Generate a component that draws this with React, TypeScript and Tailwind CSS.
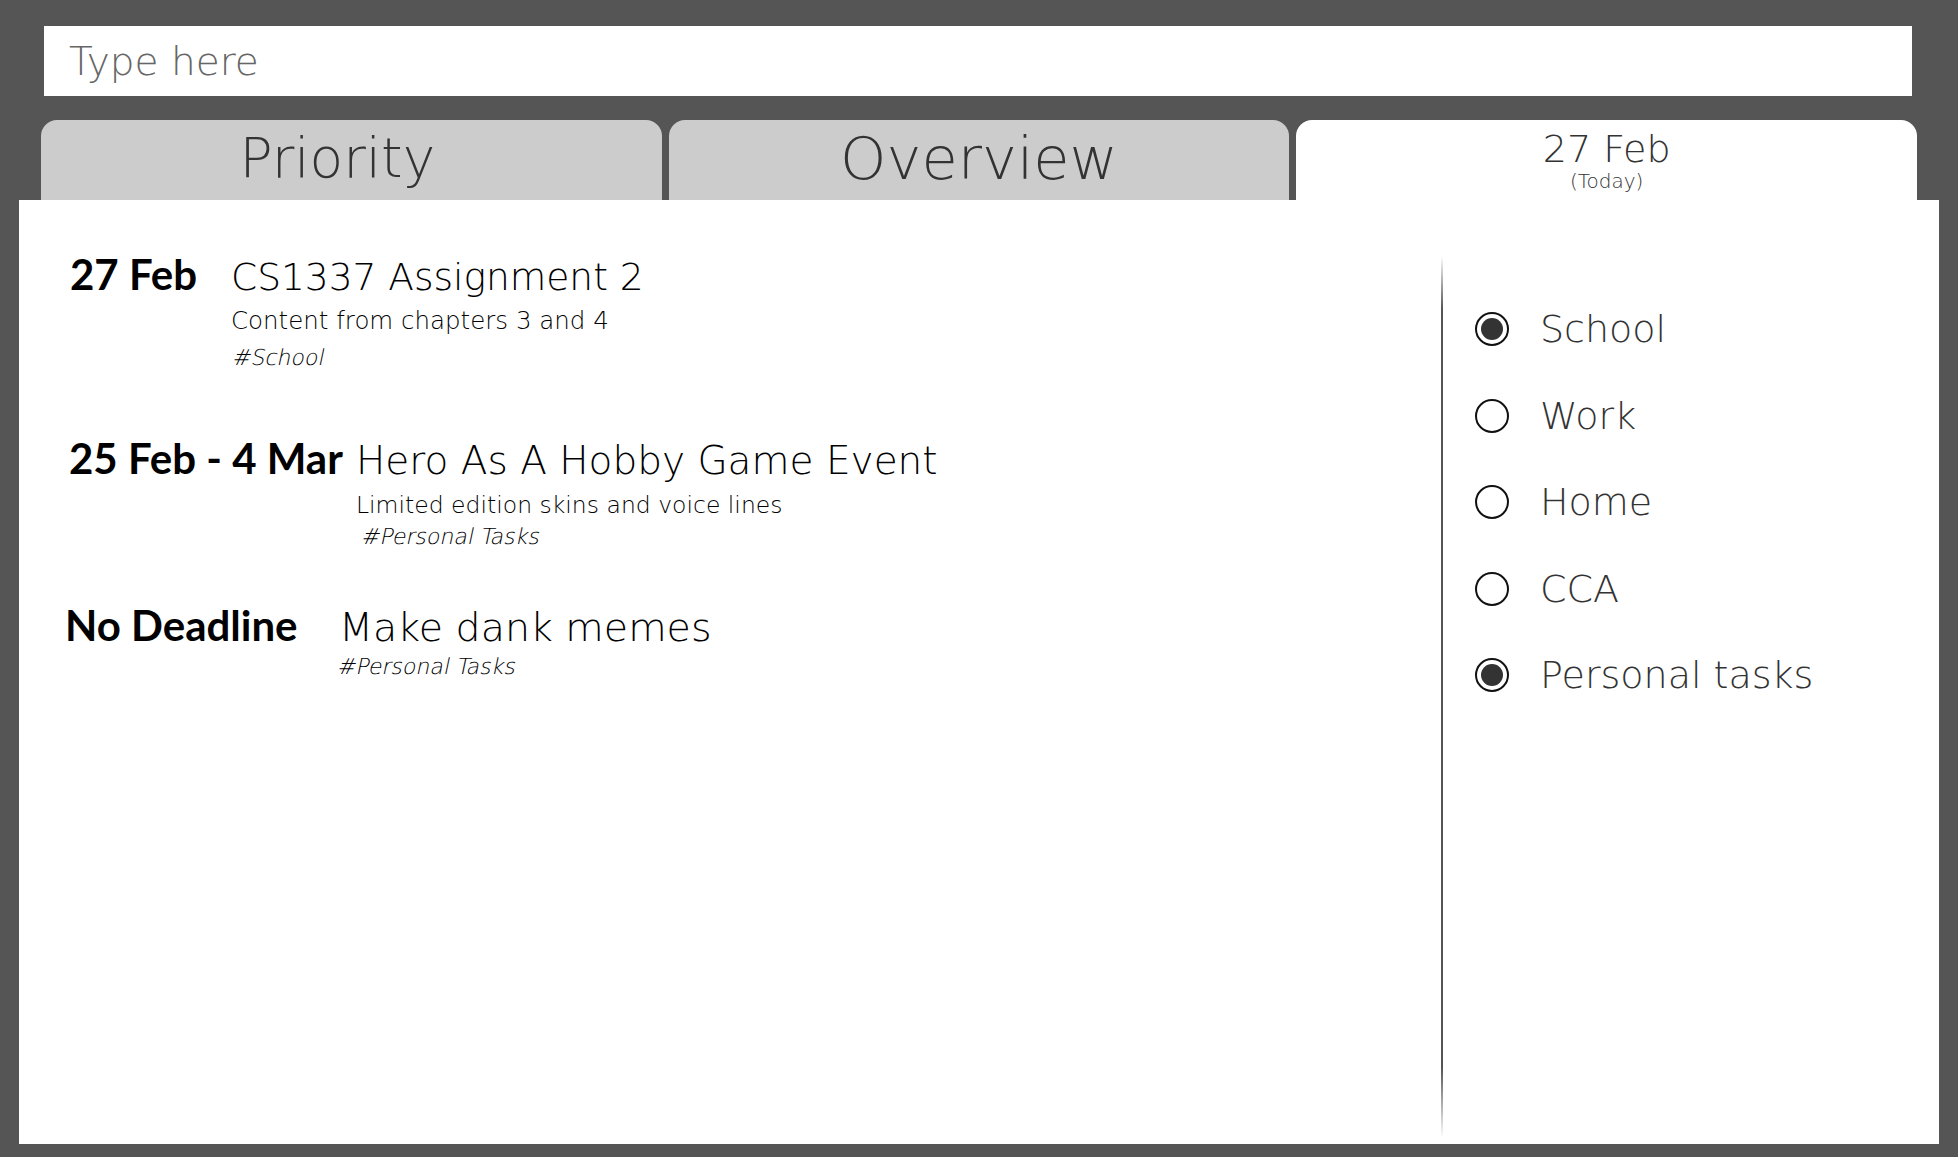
import React from "react";

const light = "font-['DejaVu_Sans',sans-serif] font-extralight";
const bold = "font-['Lato',sans-serif] font-bold";
const tag = `${light} origin-bottom-left -skew-x-12 whitespace-nowrap text-[22px] leading-none`;

function Radio({ checked, label }: { checked: boolean; label: string }) {
  return (
    <div className="flex h-[86.5px] items-center">
      <div className="flex h-[34px] w-[34px] items-center justify-center rounded-full border-2 border-[#111]">
        {checked && <div className="h-[22px] w-[22px] rounded-full bg-[#333]" />}
      </div>
      <span className={`${light} ml-[31px] text-[38px] leading-none text-[#333]`}>{label}</span>
    </div>
  );
}

export default function App() {
  return (
    <div className="flex h-[1157px] w-full flex-col bg-[#555555]">
      {/* search */}
      <div className="ml-[44px] mr-[46px] mt-[26px] h-[70px] bg-white">
        <input
          className={`${light} h-full w-full bg-white pl-[25px] text-[39px] text-[#333] outline-none placeholder:text-[#666]`}
          placeholder="Type here"
        />
      </div>

      {/* tabs */}
      <div className="mx-[41px] mt-[24px] grid h-[80px] grid-cols-3 gap-[7px]">
        <div className="flex min-w-0 items-center justify-center rounded-t-[16px] bg-[#cccccc] pb-[3px] pr-[28px]">
          <span className={`${light} text-[55px] leading-none text-[#333]`}>Priority</span>
        </div>
        <div className="flex min-w-0 items-center justify-center rounded-t-[16px] bg-[#cccccc] pb-[3px]">
          <span className={`${light} text-[59px] leading-none text-[#333]`}>Overview</span>
        </div>
        <div className="flex min-w-0 flex-col items-center rounded-t-[16px] bg-white pt-[10px]">
          <span className={`${light} text-[38px] leading-none text-[#333]`}>27 Feb</span>
          <span className={`${light} mt-[3px] text-[20px] leading-none text-[#333]`}>(Today)</span>
        </div>
      </div>

      {/* panel */}
      <div className="mx-[19px] mb-[13px] flex flex-1 bg-white">
        <div className="flex flex-1 flex-col pl-[50px] pt-[53px] text-black">
          {/* item 1 */}
          <div className="flex items-baseline">
            <div className={`${bold} w-[162px] shrink-0 whitespace-nowrap pl-[1px] text-[42px] leading-none`}>27 Feb</div>
            <div className="flex flex-col">
              <div className={`${light} whitespace-nowrap text-[37.5px] leading-none`}>CS1337 Assignment 2</div>
              <div className={`${light} mt-[12px] whitespace-nowrap text-[24.5px] leading-none`}>Content from chapters 3 and 4</div>
              <div className={`${tag} mt-[14px]`}>#School</div>
            </div>
          </div>

          {/* item 2 */}
          <div className="mt-[68px] flex items-baseline">
            <div className={`${bold} w-[287px] shrink-0 whitespace-nowrap text-[42px] leading-none`}>25 Feb - 4 Mar</div>
            <div className="flex flex-col">
              <div className={`${light} whitespace-nowrap text-[39px] leading-none`}>Hero As A Hobby Game Event</div>
              <div className={`${light} mt-[14px] whitespace-nowrap text-[23.5px] leading-none`}>Limited edition skins and voice lines</div>
              <div className={`${tag} mt-[8px] pl-[4px]`}>#Personal Tasks</div>
            </div>
          </div>

          {/* item 3 */}
          <div className="-ml-[4px] mt-[56px] flex items-baseline">
            <div className={`${bold} w-[274px] shrink-0 whitespace-nowrap text-[42px] leading-none`}>No Deadline</div>
            <div className="flex flex-col">
              <div className={`${light} whitespace-nowrap text-[39.5px] leading-none`}>Make dank memes</div>
              <div className={`${tag} -ml-[3px] mt-[9px]`}>#Personal Tasks</div>
            </div>
          </div>
        </div>

        {/* right column */}
        <div className="flex w-[498px] shrink-0">
          <div className="mb-[6px] mt-[56px] w-[2px] bg-[linear-gradient(to_bottom,transparent,#555_6%,#555_92%,transparent)]" />
          <div className="ml-[32px] flex flex-col pt-[86px]">
            <Radio checked label="School" />
            <Radio checked={false} label="Work" />
            <Radio checked={false} label="Home" />
            <Radio checked={false} label="CCA" />
            <Radio checked label="Personal tasks" />
          </div>
        </div>
      </div>
    </div>
  );
}
